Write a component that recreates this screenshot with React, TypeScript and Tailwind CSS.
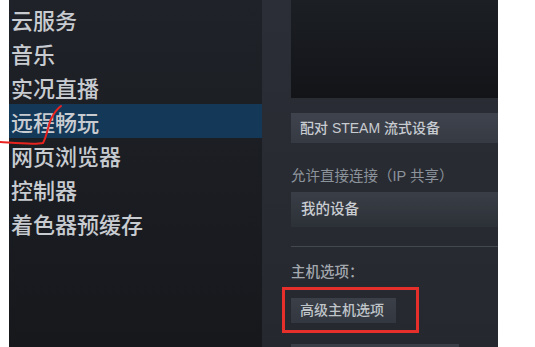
import React from "react";

const items = ["云服务", "音乐", "实况直播", "远程畅玩", "网页浏览器", "控制器", "着色器预缓存"];

export default function App() {
  const font = { fontFamily: '"Noto Sans CJK SC", "Noto Sans", sans-serif' };
  const panelFont = { fontFamily: '"Liberation Sans", "Noto Sans CJK SC", sans-serif' };
  return (
    <div className="relative w-[535px] h-[347px] flex bg-white overflow-hidden" style={font}>
      <div className="w-[9px] shrink-0 bg-white" />
      <div className="w-[253px] shrink-0 h-full bg-gradient-to-b from-[#1f2228] to-[#16181c] pt-[2px] flex flex-col">
        {items.map((t, i) => (
          <div
            key={t}
            className={`h-[34px] shrink-0 flex items-center pl-[2px] text-[22px] leading-none font-medium text-[#c8ccd1] ${i === 3 ? "bg-[#143858]" : ""}`}
          >
            {t}
          </div>
        ))}
      </div>
      <div
        className="w-[236px] shrink-0 h-full overflow-hidden bg-gradient-to-b from-[#2b2e36] to-[#25282e] pl-[29px] flex flex-col"
        style={panelFont}
      >
        <div className="shrink-0 h-[98px] bg-gradient-to-b from-[#1c1f24] to-[#121418]" />
        <div className="shrink-0 mt-[15px] h-[30px] bg-gradient-to-b from-[#3e434d] to-[#363a43] flex items-center pl-[9px] text-[14px] font-medium text-[#c8ccd1]">
          配对 STEAM 流式设备
        </div>
        <div className="shrink-0 mt-[24px] h-[20px] flex items-center text-[14.5px] text-[#8c939b]">
          允许直接连接（IP 共享）
        </div>
        <div className="shrink-0 mt-[5px] h-[35px] bg-gradient-to-b from-[#3a3e46] to-[#2c3037] flex items-center pl-[10px] text-[14.5px] font-medium text-[#c9cdd2]">
          我的设备
        </div>
        <div className="shrink-0 mt-[19px] h-px bg-[#43474e]" />
        <div className="shrink-0 mt-[16px] h-[20px] flex items-center text-[14.5px] font-medium text-[#a3a8ae]">
          主机选项：
        </div>
        <div className="shrink-0 mt-[15px] h-[25px] w-[105px] bg-gradient-to-b from-[#3b3f47] to-[#33373f] flex items-center pl-[9px] text-[14px] font-medium text-[#bfc4c9]">
          高级主机选项
        </div>
        <div className="shrink-0 mt-[21px] h-[20px] w-[168px] bg-[#3a3e46]" />
      </div>
      <div className="flex-1 bg-white" />
      <div className="absolute left-[282px] top-[287px] w-[137px] h-[46px] border-[3px] border-[#e62e2b]" />
      <svg className="absolute left-0 top-0" width="80" height="160" viewBox="0 0 80 160">
        <path
          d="M0 142 C 15 143, 34 145, 43 143 C 47 136, 48 126, 51 119 C 54 113, 57 109, 61 106"
          fill="none"
          stroke="#e8231f"
          strokeWidth="2"
          strokeLinecap="round"
        />
      </svg>
    </div>
  );
}
